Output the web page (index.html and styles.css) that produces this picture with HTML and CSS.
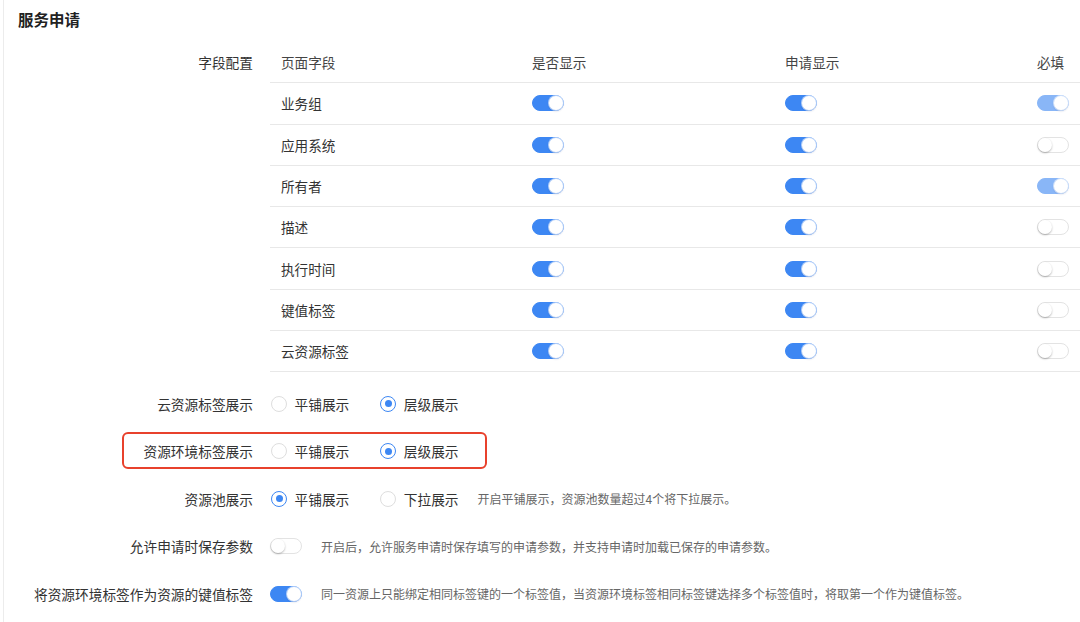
FILE: index.html
```html
<!DOCTYPE html>
<html lang="zh-CN">
<head>
<meta charset="utf-8">
<link rel="stylesheet" href="styles.css">
</head>
<body>
<div class="page">
  <h2 class="title">服务申请</h2>

  <div class="form-row table-row-wrap">
    <div class="label label-top">字段配置</div>
    <div class="table">
      <div class="tr th">
        <div class="td">页面字段</div>
        <div class="td">是否显示</div>
        <div class="td">申请显示</div>
        <div class="td">必填</div>
      </div>
      <div class="tr">
        <div class="td">业务组</div>
        <div class="td"><span class="switch on"></span></div>
        <div class="td"><span class="switch on"></span></div>
        <div class="td"><span class="switch on disabled"></span></div>
      </div>
      <div class="tr">
        <div class="td">应用系统</div>
        <div class="td"><span class="switch on"></span></div>
        <div class="td"><span class="switch on"></span></div>
        <div class="td"><span class="switch"></span></div>
      </div>
      <div class="tr">
        <div class="td">所有者</div>
        <div class="td"><span class="switch on"></span></div>
        <div class="td"><span class="switch on"></span></div>
        <div class="td"><span class="switch on disabled"></span></div>
      </div>
      <div class="tr">
        <div class="td">描述</div>
        <div class="td"><span class="switch on"></span></div>
        <div class="td"><span class="switch on"></span></div>
        <div class="td"><span class="switch"></span></div>
      </div>
      <div class="tr">
        <div class="td">执行时间</div>
        <div class="td"><span class="switch on"></span></div>
        <div class="td"><span class="switch on"></span></div>
        <div class="td"><span class="switch"></span></div>
      </div>
      <div class="tr">
        <div class="td">键值标签</div>
        <div class="td"><span class="switch on"></span></div>
        <div class="td"><span class="switch on"></span></div>
        <div class="td"><span class="switch"></span></div>
      </div>
      <div class="tr">
        <div class="td">云资源标签</div>
        <div class="td"><span class="switch on"></span></div>
        <div class="td"><span class="switch on"></span></div>
        <div class="td"><span class="switch"></span></div>
      </div>
    </div>
  </div>

  <div class="rows">
    <div class="form-row line">
      <div class="label">云资源标签展示</div>
      <div class="control">
        <label class="radio"><span class="dot"></span>平铺展示</label>
        <label class="radio"><span class="dot checked"></span>层级展示</label>
      </div>
    </div>
    <div class="form-row line highlight-row">
      <div class="label">资源环境标签展示</div>
      <div class="control">
        <label class="radio"><span class="dot"></span>平铺展示</label>
        <label class="radio"><span class="dot checked"></span>层级展示</label>
      </div>
      <div class="highlight"></div>
    </div>
    <div class="form-row line">
      <div class="label">资源池展示</div>
      <div class="control">
        <label class="radio"><span class="dot checked"></span>平铺展示</label>
        <label class="radio last"><span class="dot"></span>下拉展示</label>
        <span class="hint">开启平铺展示，资源池数量超过4个将下拉展示。</span>
      </div>
    </div>
    <div class="form-row line">
      <div class="label">允许申请时保存参数</div>
      <div class="control">
        <span class="switch"></span>
        <span class="hint hint-switch">开启后，允许服务申请时保存填写的申请参数，并支持申请时加载已保存的申请参数。</span>
      </div>
    </div>
    <div class="form-row line">
      <div class="label">将资源环境标签作为资源的键值标签</div>
      <div class="control">
        <span class="switch on"></span>
        <span class="hint hint-switch">同一资源上只能绑定相同标签键的一个标签值，当资源环境标签相同标签键选择多个标签值时，将取第一个作为键值标签。</span>
      </div>
    </div>
  </div>
</div>
</body>
</html>
```

FILE: styles.css
```css
* { box-sizing: border-box; }
html, body {
  margin: 0;
  padding: 0;
  background: #fff;
  overflow: hidden;
}
body {
  width: 1080px;
  height: 622px;
  font-family: "PingFang SC", "Noto Sans CJK SC", "Noto Sans", sans-serif;
  color: #333;
}
.page {
  margin-left: 3px;
  border-left: 1px solid #ececec;
  height: 622px;
}
.title {
  margin: 0;
  padding: 8px 0 0 14px;
  height: 42px;
  font-size: 15.5px;
  line-height: 22px;
  font-weight: 700;
  color: #222;
}
.form-row {
  display: flex;
  align-items: center;
  gap: 17px;
}
.table-row-wrap { align-items: flex-start; }
.label {
  width: 249px;
  flex: none;
  text-align: right;
  font-size: 13.7px;
  color: #333;
  white-space: nowrap;
}
.label-top { line-height: 41px; }
.table {
  flex: 1;
  font-size: 13.6px;
  color: #333;
}
.tr {
  display: flex;
  height: 41.3px;
  border-bottom: 1px solid #e8e8e8;
  align-items: center;
}
.th { color: #444; }
.td {
  padding-left: 11px;
  white-space: nowrap;
  display: flex;
  align-items: center;
}
.td:nth-child(1) { width: 251px; }
.td:nth-child(2) { width: 253px; }
.td:nth-child(3) { width: 252px; }
.td:nth-child(4) { flex: 1; }

.switch {
  position: relative;
  display: inline-block;
  width: 32px;
  height: 16px;
  border-radius: 8px;
  background: #fff;
  border: 1px solid #e3e3e3;
  flex: none;
}
.switch::after {
  content: "";
  position: absolute;
  top: 0;
  left: 0;
  width: 14px;
  height: 14px;
  border-radius: 50%;
  background: #fff;
  box-shadow: 0 1px 2px rgba(0,0,0,0.28);
}
.switch.on {
  background: #3d87f3;
  border-color: #3d87f3;
}
.switch.on::after {
  left: auto;
  right: 0;
  box-shadow: 0 0 0 1px rgba(255,255,255,0.6), 0 1px 2px rgba(0,40,120,0.25);
}
.switch.on.disabled {
  background: #89b6f7;
  border-color: #89b6f7;
}

.rows { padding-top: 7.5px; }
.line { height: 47.5px; position: relative; }
.control {
  display: flex;
  align-items: center;
  font-size: 13.7px;
  color: #333;
}
.radio {
  display: inline-flex;
  align-items: center;
  gap: 7.5px;
  margin-left: 1px;
  margin-right: 30px;
  white-space: nowrap;
}
.radio.last { margin-right: 19px; }
.dot {
  width: 16px;
  height: 16px;
  border-radius: 50%;
  border: 1px solid #dedede;
  background: #fff;
  position: relative;
  flex: none;
}
.dot.checked { border-color: #3d87f3; }
.dot.checked::after {
  content: "";
  position: absolute;
  left: 50%;
  top: 50%;
  width: 7px;
  height: 7px;
  margin: -3.5px 0 0 -3.5px;
  border-radius: 50%;
  background: #3d87f3;
}
.hint {
  font-size: 12px;
  color: #666;
  white-space: nowrap;
}
.hint-switch { margin-left: 19px; }

.highlight {
  position: absolute;
  left: 118px;
  top: 4.5px;
  width: 365px;
  height: 37px;
  border: 2.6px solid #e8412c;
  border-radius: 6px;
  pointer-events: none;
}
```
